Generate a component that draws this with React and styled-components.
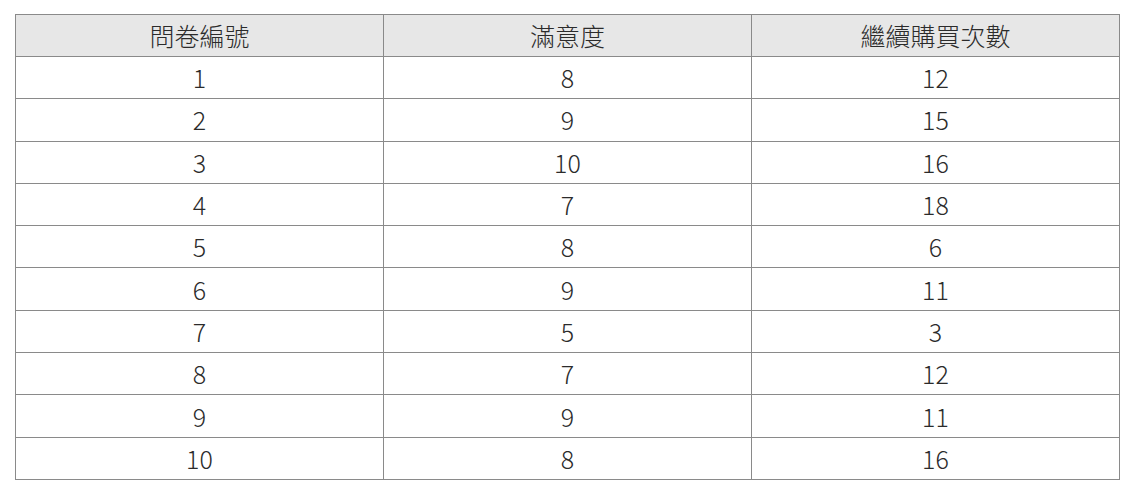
import React from 'react';
import styled, { createGlobalStyle } from 'styled-components';

const GlobalStyle = createGlobalStyle`
    body {
        margin: 0;
        background: #fff;
        font-family: "Noto Sans CJK TC", "Noto Sans", sans-serif;
    }
`;

const Page = styled.div`
    padding: 14px 26px 0 15px;
`;

const Table = styled.table`
    width: 1105px;
    border-collapse: collapse;
    table-layout: fixed;
    border: 1.5px solid #808080;
    color: #2b2b2b;
    font-weight: 200;
    font-size: 25px;
    line-height: 1;
`;

const HeadCell = styled.th`
    height: 41px;
    padding: 0;
    background: #e7e7e7;
    font-weight: 200;
    text-align: center;
    border: 1.5px solid #8a8a8a;
`;

const Cell = styled.td`
    height: 41.3px;
    padding: 0;
    text-align: center;
    border: 1.5px solid #8a8a8a;
`;

const rows = [
    [1, 8, 12],
    [2, 9, 15],
    [3, 10, 16],
    [4, 7, 18],
    [5, 8, 6],
    [6, 9, 11],
    [7, 5, 3],
    [8, 7, 12],
    [9, 9, 11],
    [10, 8, 16],
];

export default function App() {
    return (
        <Page>
            <GlobalStyle />
            <Table>
                <thead>
                    <tr>
                        <HeadCell>問卷編號</HeadCell>
                        <HeadCell>滿意度</HeadCell>
                        <HeadCell>繼續購買次數</HeadCell>
                    </tr>
                </thead>
                <tbody>
                    {rows.map(row => (
                        <tr key={row[0]}>
                            {row.map((v, i) => <Cell key={i}>{v}</Cell>)}
                        </tr>
                    ))}
                </tbody>
            </Table>
        </Page>
    );
}
